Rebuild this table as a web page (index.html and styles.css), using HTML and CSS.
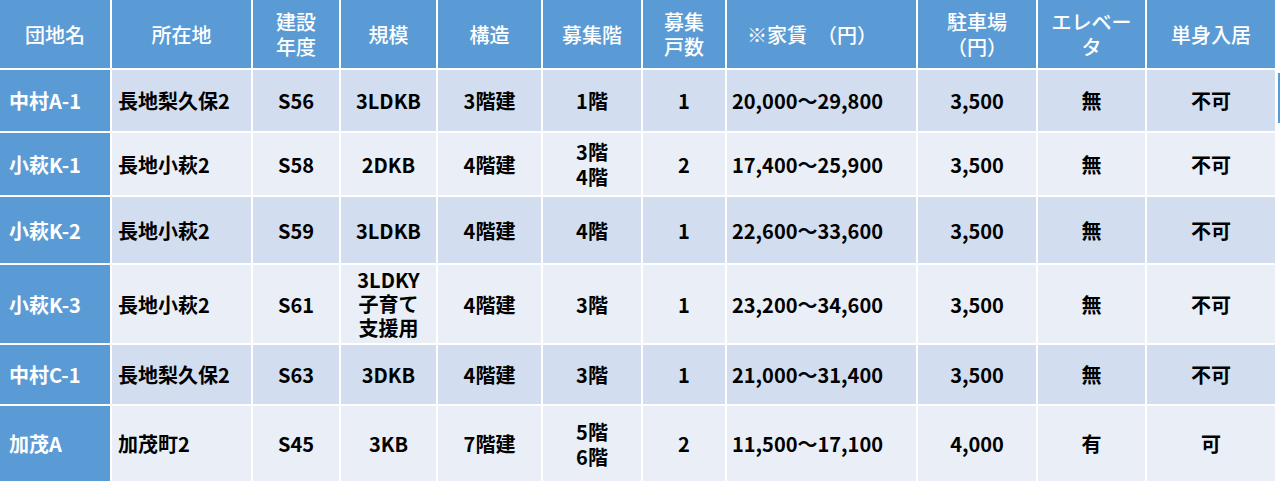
FILE: index.html
```html
<!DOCTYPE html>
<html lang="ja">
<head>
<meta charset="utf-8">
<title>団地一覧</title>
<link rel="stylesheet" href="styles.css">
</head>
<body>
<div class="page">
  <div class="grid">
    <div class="h">団地名</div>
    <div class="h">所在地</div>
    <div class="h">建設<br>年度</div>
    <div class="h">規模</div>
    <div class="h">構造</div>
    <div class="h">募集階</div>
    <div class="h">募集<br>戸数</div>
    <div class="h h-rent">※家賃　（円）</div>
    <div class="h">駐車場<br>（円）</div>
    <div class="h">エレベー<br>タ</div>
    <div class="h">単身入居</div>

    <div class="c name r1">中村A-1</div>
    <div class="c left r1">長地梨久保2</div>
    <div class="c r1">S56</div>
    <div class="c r1">3LDKB</div>
    <div class="c r1">3階建</div>
    <div class="c r1">1階</div>
    <div class="c r1">1</div>
    <div class="c rent r1">20,000～29,800</div>
    <div class="c r1">3,500</div>
    <div class="c r1">無</div>
    <div class="c r1">不可</div>

    <div class="c name r2">小萩K-1</div>
    <div class="c left r2">長地小萩2</div>
    <div class="c r2">S58</div>
    <div class="c r2">2DKB</div>
    <div class="c r2">4階建</div>
    <div class="c r2">3階<br>4階</div>
    <div class="c r2">2</div>
    <div class="c rent r2">17,400～25,900</div>
    <div class="c r2">3,500</div>
    <div class="c r2">無</div>
    <div class="c r2">不可</div>

    <div class="c name r1">小萩K-2</div>
    <div class="c left r1">長地小萩2</div>
    <div class="c r1">S59</div>
    <div class="c r1">3LDKB</div>
    <div class="c r1">4階建</div>
    <div class="c r1">4階</div>
    <div class="c r1">1</div>
    <div class="c rent r1">22,600～33,600</div>
    <div class="c r1">3,500</div>
    <div class="c r1">無</div>
    <div class="c r1">不可</div>

    <div class="c name r2">小萩K-3</div>
    <div class="c left r2">長地小萩2</div>
    <div class="c r2">S61</div>
    <div class="c r2 tight">3LDKY<br>子育て<br>支援用</div>
    <div class="c r2">4階建</div>
    <div class="c r2">3階</div>
    <div class="c r2">1</div>
    <div class="c rent r2">23,200～34,600</div>
    <div class="c r2">3,500</div>
    <div class="c r2">無</div>
    <div class="c r2">不可</div>

    <div class="c name r1">中村C-1</div>
    <div class="c left r1">長地梨久保2</div>
    <div class="c r1">S63</div>
    <div class="c r1">3DKB</div>
    <div class="c r1">4階建</div>
    <div class="c r1">3階</div>
    <div class="c r1">1</div>
    <div class="c rent r1">21,000～31,400</div>
    <div class="c r1">3,500</div>
    <div class="c r1">無</div>
    <div class="c r1">不可</div>

    <div class="c name r2">加茂A</div>
    <div class="c left r2">加茂町2</div>
    <div class="c r2">S45</div>
    <div class="c r2">3KB</div>
    <div class="c r2">7階建</div>
    <div class="c r2">5階<br>6階</div>
    <div class="c r2">2</div>
    <div class="c rent r2">11,500～17,100</div>
    <div class="c r2">4,000</div>
    <div class="c r2">有</div>
    <div class="c r2">可</div>
  </div>
  <div class="edge"></div>
</div>
</body>
</html>
```

FILE: styles.css
```css
html, body {
  margin: 0;
  padding: 0;
  background: #ffffff;
}

.page {
  position: relative;
  width: 1285px;
  height: 483px;
  overflow: hidden;
  font-family: "Noto Sans CJK JP", "Noto Sans", sans-serif;
}

.grid {
  display: grid;
  width: 1275px;
  grid-template-columns: 110px 139px 86px 95px 103px 98px 82px 189px 118px 107px 128px;
  grid-template-rows: 68px 61px 62px 66px 78px 59px 75px;
  column-gap: 2px;
  row-gap: 2px;
}

.h {
  background: #5b9bd5;
  color: #ffffff;
  font-size: 20px;
  font-weight: 500;
  line-height: 25px;
  display: flex;
  align-items: center;
  justify-content: center;
  text-align: center;
}

.h-rent {
  justify-content: flex-start;
  padding-left: 20px;
}

.c {
  display: flex;
  align-items: center;
  justify-content: center;
  text-align: center;
  font-size: 20px;
  font-weight: 700;
  line-height: 25px;
  color: #000000;
}

.r1 { background: #d2deef; }
.r2 { background: #eaeff7; }

.c.name {
  background: #5b9bd5;
  color: #ffffff;
  justify-content: flex-start;
  padding-left: 9px;
}

.c.left {
  justify-content: flex-start;
  padding-left: 6px;
}

.c.rent {
  justify-content: flex-start;
  padding-left: 5px;
}

.c.tight {
  line-height: 24px;
}

.edge {
  position: absolute;
  left: 1278px;
  top: 73px;
  width: 2px;
  height: 50px;
  background: #5b9bd5;
}
```
